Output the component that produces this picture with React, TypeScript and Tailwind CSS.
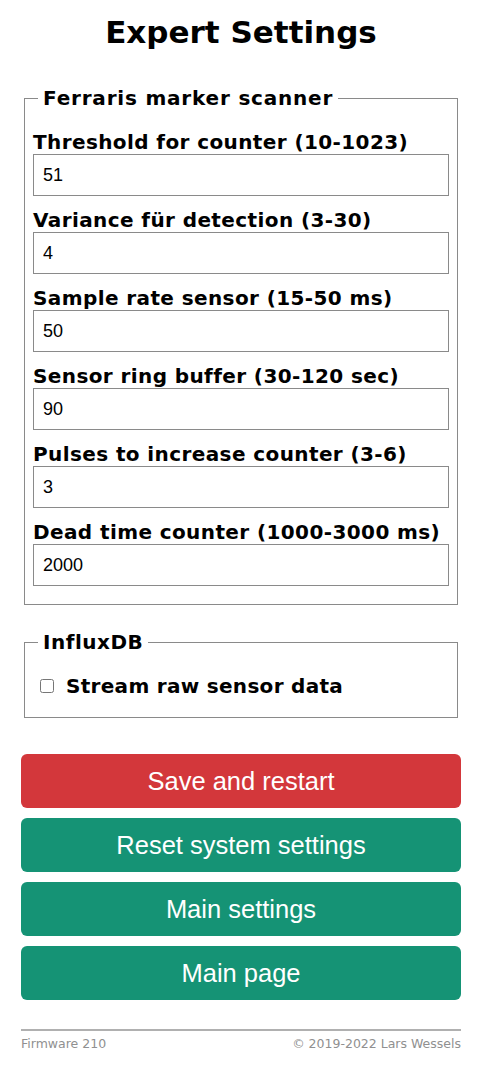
const fields = [
  { label: "Threshold for counter (10-1023)", value: "51" },
  { label: "Variance für detection (3-30)", value: "4" },
  { label: "Sample rate sensor (15-50 ms)", value: "50" },
  { label: "Sensor ring buffer (30-120 sec)", value: "90" },
  { label: "Pulses to increase counter (3-6)", value: "3" },
  { label: "Dead time counter (1000-3000 ms)", value: "2000" },
];

const verdana = "font-['DejaVu_Sans',Verdana,sans-serif]";

export default function App() {
  return (
    <div className="w-[482px] min-h-[1070px] bg-white text-black px-[21px]">
      <h1 className={`${verdana} text-[31px] font-bold text-center pt-[12px] leading-[40px]`}>
        Expert Settings
      </h1>

      <fieldset className="mt-[34px] mx-[3px] border border-[#8a8a8a] px-[8px] pt-[16px] pb-[18px]">
        <legend className={`${verdana} text-[20px] font-bold tracking-[0.8px] px-[5px] ml-[5px] leading-[24px]`}>
          Ferraris marker scanner
        </legend>
        {fields.map((f) => (
          <div key={f.label} className="mb-[8px] last:mb-0">
            <label className={`${verdana} block text-[20px] font-bold tracking-[0.4px] leading-[24px] pt-[4px]`}>
              {f.label}
            </label>
            <input
              defaultValue={f.value}
              className="block w-full h-[42px] border border-[#8a8a8a] px-[9px] text-[18px] font-['Liberation_Sans',Arial,sans-serif] outline-none"
            />
          </div>
        ))}
      </fieldset>

      <fieldset className="mt-[25px] mx-[3px] border border-[#8a8a8a] px-[15px] pt-[20px] pb-[19px]">
        <legend className={`${verdana} text-[20px] font-bold tracking-[0.5px] px-[5px] -ml-[2px] leading-[24px]`}>
          InfluxDB
        </legend>
        <label className="flex items-center gap-[12px]">
          <input type="checkbox" className="w-[14px] h-[14px] m-0" />
          <span className={`${verdana} text-[20px] font-bold tracking-[0.3px] leading-[24px]`}>
            Stream raw sensor data
          </span>
        </label>
      </fieldset>

      <div className="mt-[36px] flex flex-col gap-[10px] font-['Liberation_Sans',Arial,sans-serif]">
        <button className="h-[54px] rounded-[6px] bg-[#d3373b] text-white text-[25.5px]">
          Save and restart
        </button>
        <button className="h-[54px] rounded-[6px] bg-[#159375] text-white text-[25.5px]">
          Reset system settings
        </button>
        <button className="h-[54px] rounded-[6px] bg-[#159375] text-white text-[25.5px]">
          Main settings
        </button>
        <button className="h-[54px] rounded-[6px] bg-[#159375] text-white text-[25.5px]">
          Main page
        </button>
      </div>

      <div className="mt-[29px] border-t-2 border-[#b0b0b0] flex justify-between pt-[4px] text-[12.5px] text-[#909090] font-['DejaVu_Sans',Verdana,sans-serif]">
        <span>Firmware 210</span>
        <span>© 2019-2022 Lars Wessels</span>
      </div>
    </div>
  );
}
